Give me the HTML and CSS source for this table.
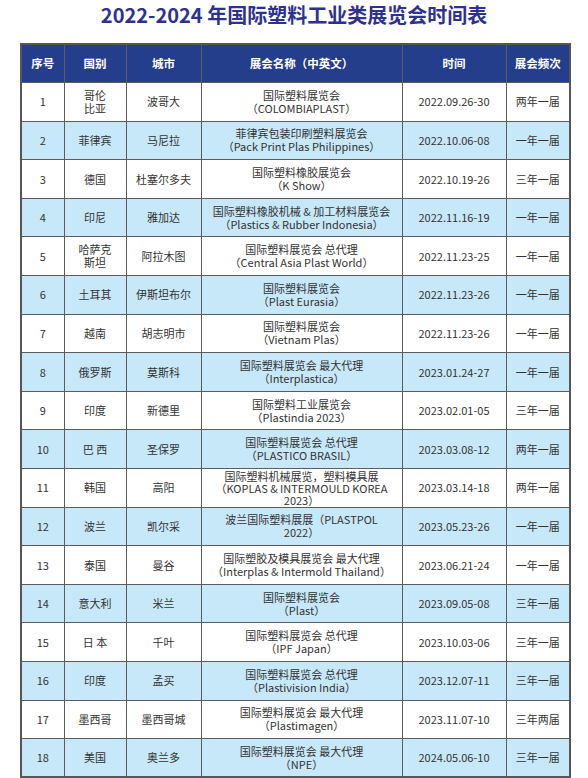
FILE: index.html
```html
<!DOCTYPE html>
<html lang="zh">
<head>
<meta charset="utf-8">
<link rel="stylesheet" href="styles.css">
</head>
<body>
<h1 class="title">2022-2024 年国际塑料工业类展览会时间表</h1>
<table class="sched">
<colgroup>
<col class="c1"><col class="c2"><col class="c3"><col class="c4"><col class="c5"><col class="c6">
</colgroup>
<thead>
<tr><th>序号</th><th>国别</th><th>城市</th><th>展会名称（中英文）</th><th>时间</th><th>展会频次</th></tr>
</thead>
<tbody>
<tr><td>1</td><td>哥伦<br>比亚</td><td>波哥大</td><td>国际塑料展览会<br>（COLOMBIAPLAST）</td><td>2022.09.26-30</td><td>两年一届</td></tr>
<tr><td>2</td><td>菲律宾</td><td>马尼拉</td><td>菲律宾包装印刷塑料展览会<br>（Pack Print Plas Philippines）</td><td>2022.10.06-08</td><td>一年一届</td></tr>
<tr><td>3</td><td>德国</td><td>杜塞尔多夫</td><td>国际塑料橡胶展览会<br>（K Show）</td><td>2022.10.19-26</td><td>三年一届</td></tr>
<tr><td>4</td><td>印尼</td><td>雅加达</td><td>国际塑料橡胶机械 &amp; 加工材料展览会<br>（Plastics &amp; Rubber Indonesia）</td><td>2022.11.16-19</td><td>一年一届</td></tr>
<tr><td>5</td><td>哈萨克<br>斯坦</td><td>阿拉木图</td><td>国际塑料展览会 总代理<br>（Central Asia Plast World）</td><td>2022.11.23-25</td><td>一年一届</td></tr>
<tr><td>6</td><td>土耳其</td><td>伊斯坦布尔</td><td>国际塑料展览会<br>（Plast Eurasia）</td><td>2022.11.23-26</td><td>一年一届</td></tr>
<tr><td>7</td><td>越南</td><td>胡志明市</td><td>国际塑料展览会<br>（Vietnam Plas）</td><td>2022.11.23-26</td><td>一年一届</td></tr>
<tr><td>8</td><td>俄罗斯</td><td>莫斯科</td><td>国际塑料展览会 最大代理<br>（Interplastica）</td><td>2023.01.24-27</td><td>一年一届</td></tr>
<tr><td>9</td><td>印度</td><td>新德里</td><td>国际塑料工业展览会<br>（Plastindia 2023）</td><td>2023.02.01-05</td><td>三年一届</td></tr>
<tr><td>10</td><td>巴 西</td><td>圣保罗</td><td>国际塑料展览会 总代理<br>（PLASTICO BRASIL）</td><td>2023.03.08-12</td><td>两年一届</td></tr>
<tr><td>11</td><td>韩国</td><td>高阳</td><td class="tight">国际塑料机械展览，塑料模具展<br>（KOPLAS &amp; INTERMOULD KOREA<br>2023）</td><td>2023.03.14-18</td><td>两年一届</td></tr>
<tr><td>12</td><td>波兰</td><td>凯尔采</td><td>波兰国际塑料展展（PLASTPOL<br>2022）</td><td>2023.05.23-26</td><td>一年一届</td></tr>
<tr><td>13</td><td>泰国</td><td>曼谷</td><td>国际塑胶及模具展览会 最大代理<br>（Interplas &amp; Intermold Thailand）</td><td>2023.06.21-24</td><td>一年一届</td></tr>
<tr><td>14</td><td>意大利</td><td>米兰</td><td>国际塑料展览会<br>（Plast）</td><td>2023.09.05-08</td><td>三年一届</td></tr>
<tr><td>15</td><td>日 本</td><td>千叶</td><td>国际塑料展览会 总代理<br>（IPF Japan）</td><td>2023.10.03-06</td><td>三年一届</td></tr>
<tr><td>16</td><td>印度</td><td>孟买</td><td>国际塑料展览会 总代理<br>（Plastivision India）</td><td>2023.12.07-11</td><td>三年一届</td></tr>
<tr><td>17</td><td>墨西哥</td><td>墨西哥城</td><td>国际塑料展览会 最大代理<br>（Plastimagen）</td><td>2023.11.07-10</td><td>三年两届</td></tr>
<tr><td>18</td><td>美国</td><td>奥兰多</td><td>国际塑料展览会 最大代理<br>（NPE）</td><td>2024.05.06-10</td><td>三年一届</td></tr>
</tbody>
</table>
</body>
</html>
```
FILE: styles.css
```css
html, body {
  margin: 0;
  padding: 0;
  background: #ffffff;
}
body {
  font-family: "Noto Sans CJK SC", "Noto Sans", sans-serif;
  color: #333333;
  width: 588px;
}
.title {
  margin: 0;
  height: 43px;
  box-sizing: border-box;
  padding-top: 1px;
  text-align: center;
  font-size: 20px;
  line-height: 28px;
  font-weight: 700;
  color: #2e3190;
  letter-spacing: 0;
}
.sched {
  margin-left: 20px;
  border-collapse: collapse;
  table-layout: fixed;
  width: 549px;
  border: 2px solid #565656;
}
.c1 { width: 43px; }
.c2 { width: 62px; }
.c3 { width: 75px; }
.c4 { width: 201px; }
.c5 { width: 104px; }
.c6 { width: 64px; }
.sched th, .sched td {
  border: 1.5px solid #5c5c5c;
  text-align: center;
  vertical-align: middle;
  padding: 0 2px;
  font-size: 11px;
  line-height: 13px;
  white-space: nowrap;
}
.sched thead tr {
  height: 38.6px;
}
.sched th {
  background: #243e8c;
  color: #ffffff;
  font-weight: 700;
  font-size: 11.5px;
}
.sched tbody tr {
  height: 38.6px;
}
.sched tbody tr:nth-child(even) td {
  background: #c7e8f8;
}
.sched td.tight {
  line-height: 12px;
}
```
